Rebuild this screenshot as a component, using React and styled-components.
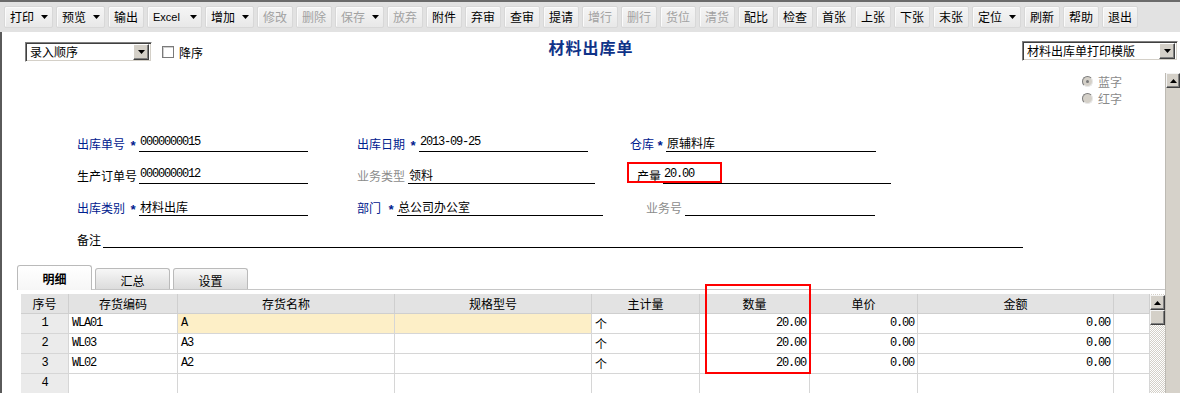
import React from 'react';
import styled, { createGlobalStyle } from 'styled-components';

const CJK = `"Noto Sans CJK SC", "Noto Sans", sans-serif`;
const MONO = `"Liberation Mono", "DejaVu Sans Mono", "Noto Sans CJK SC", monospace`;

const GlobalStyle = createGlobalStyle`
  html, body { margin: 0; padding: 0; background: #fff; }
  body { font-family: ${CJK}; font-size: 12px; color: #000; }
  *, *::before, *::after { box-sizing: border-box; }
`;

const Window = styled.div`
  width: 1180px;
  height: 393px;
  overflow: hidden;
  display: flex;
  flex-direction: column;
  background: #fff;
`;

/* ---------- toolbar ---------- */
const Toolbar = styled.div`
  height: 32px;
  flex-shrink: 0;
  border-top: 2px solid #6b6b6b;
  background: #e2e2e2;
  display: flex;
  align-items: center;
  gap: 3px;
  padding-left: 4px;
`;

const ToolButton = styled.div`
  width: ${(p) => p.$w}px;
  height: 22px;
  flex-shrink: 0;
  display: flex;
  align-items: center;
  justify-content: ${(p) => (p.$dd ? 'space-between' : 'center')};
  padding: ${(p) => (p.$dd ? '0 4px 0 5px' : '0')};
  border: 1px solid #d8d8d8;
  border-radius: 2px;
  background: linear-gradient(180deg, #f5f5f5 0%, #eeeeee 55%, #e8e8e8 100%);
  box-shadow: inset 1px 1px 0 #fbfbfb;
  color: ${(p) => (p.$disabled ? '#a2a2a2' : '#000')};
  font-size: 12px;
  line-height: 16px;
  white-space: nowrap;
`;

const ButtonText = styled.span`
  font-family: ${(p) => (p.$latin ? `"Liberation Sans", Arial, sans-serif` : CJK)};
  font-size: ${(p) => (p.$latin ? '11px' : '12px')};
`;

const Tri = ({ up }) => (
  <svg width="7" height="4" viewBox="0 0 7 4" style={{ display: 'block' }}>
    <polygon points={up ? '0,4 7,4 3.5,0' : '0,0 7,0 3.5,4'} fill="#000" />
  </svg>
);

/* ---------- main ---------- */
const Main = styled.div`
  flex: 1;
  min-height: 0;
  display: flex;
  flex-direction: column;
  border-left: 2px solid #5a5a5a;
`;

const HeaderRow = styled.div`
  height: 41px;
  flex-shrink: 0;
  display: grid;
  grid-template-columns: 1fr auto 1fr;
  align-items: start;
`;

const HeaderLeft = styled.div`
  display: flex;
  align-items: center;
  gap: 10px;
  margin: 10px 0 0 23px;
`;

const HeaderRight = styled.div`
  justify-self: end;
  margin: 9px 2px 0 0;
`;

const Title = styled.div`
  margin-top: 4px;
  font-size: 16px;
  line-height: 22px;
  font-weight: bold;
  letter-spacing: 1px;
  color: #0f3388;
`;

const Combo = styled.div`
  width: ${(p) => p.$w}px;
  height: 20px;
  display: flex;
  align-items: center;
  padding: 2px;
  background: #fff;
  border: 1px solid;
  border-color: #808080 #ffffff #ffffff #808080;
  box-shadow: inset 1px 1px 0 #404040, inset -1px -1px 0 #d4d0c8;
`;

const ComboText = styled.span`
  flex: 1;
  padding-left: 2px;
  line-height: 16px;
  white-space: nowrap;
`;

const ComboButton = styled.div`
  width: 16px;
  height: 16px;
  display: flex;
  align-items: center;
  justify-content: center;
  background: #d4d0c8;
  border: 1px solid;
  border-color: #ffffff #404040 #404040 #ffffff;
  box-shadow: inset -1px -1px 0 #808080;
`;

const CheckRow = styled.label`
  display: flex;
  align-items: center;
  gap: 5px;
`;

const CheckBox = styled.span`
  width: 12px;
  height: 12px;
  background: #fff;
  border: 1px solid #7a7a7a;
  box-shadow: inset 1px 1px 0 #cfcfcf;
`;

/* ---------- body ---------- */
const Body = styled.div`
  flex: 1;
  min-height: 0;
  display: flex;
`;

const Content = styled.div`
  flex: 1;
  min-width: 0;
  display: flex;
  flex-direction: column;
`;

const OuterScroll = styled.div`
  width: 15px;
  flex-shrink: 0;
  display: flex;
  flex-direction: column;
  background: #d6d2ca;
  border-left: 1px solid #bdbab3;
`;

const ScrollButton = styled.div`
  width: 100%;
  height: 15px;
  flex-shrink: 0;
  display: flex;
  align-items: center;
  justify-content: center;
  background: #d4d0c8;
  border: 1px solid;
  border-color: #f4f4f4 #404040 #404040 #f4f4f4;
  box-shadow: inset -1px -1px 0 #808080;
`;

const RadioGroup = styled.div`
  align-self: flex-end;
  margin-right: 43px;
  display: flex;
  flex-direction: column;
`;

const RadioItem = styled.div`
  height: 17px;
  display: flex;
  align-items: center;
  gap: 5px;
  color: #8a8a8a;
`;

const RadioDot = styled.span`
  width: 11px;
  height: 11px;
  border-radius: 50%;
  background: #d4d0c8;
  border: 1px solid;
  border-color: #7c7c7c #e8e8e8 #e8e8e8 #7c7c7c;
  display: flex;
  align-items: center;
  justify-content: center;
  &::after {
    content: '';
    width: 3px;
    height: 3px;
    border-radius: 50%;
    background: ${(p) => (p.$checked ? '#7a7a7a' : 'transparent')};
  }
`;

/* ---------- form ---------- */
const Form = styled.div`
  margin-top: 13px;
  padding-left: 75px;
  display: flex;
  flex-direction: column;
`;

const FormRow = styled.div`
  height: 32px;
  display: grid;
  grid-template-columns: 280px 270px 1fr;
  align-items: end;
`;

const Field = styled.div`
  position: relative;
  display: flex;
  align-items: flex-end;
  padding-left: ${(p) => p.$indent || 0}px;
  grid-column: ${(p) => (p.$span ? '1 / -1' : 'auto')};
`;

const LabelBox = styled.div`
  width: ${(p) => p.$w}px;
  height: 17px;
  display: flex;
  align-items: flex-end;
  justify-content: space-between;
  padding-right: 2px;
  flex-shrink: 0;
`;

const tones = { blue: '#00208e', black: '#000', gray: '#8c8c8c' };

const LabelText = styled.span`
  line-height: 16px;
  white-space: nowrap;
  color: ${(p) => tones[p.$tone]};
`;

const Star = styled.span`
  color: #00208e;
  font-family: ${MONO};
  font-size: 13px;
  font-weight: bold;
  line-height: 16px;
  position: relative;
  top: 3px;
`;

const Value = styled.div`
  width: ${(p) => p.$w}px;
  height: 17px;
  flex-shrink: 0;
  border-bottom: 1px solid #000;
  padding-left: 1px;
  line-height: 15px;
  white-space: nowrap;
  font-family: ${(p) => (p.$mono ? MONO : CJK)};
  font-size: 12px;
  letter-spacing: ${(p) => (p.$mono ? '-1.2px' : '0')};
`;

const RedMark = styled.div`
  position: absolute;
  left: 0;
  top: -5px;
  width: ${(p) => p.$w}px;
  height: ${(p) => p.$h}px;
  border: 2px solid #ff0000;
  pointer-events: none;
`;

/* ---------- tabs + grid ---------- */
const TabArea = styled.div`
  margin: 17px 0 0 15px;
  flex: 1;
  min-height: 0;
  display: flex;
  flex-direction: column;
`;

const TabStrip = styled.div`
  height: 25px;
  flex-shrink: 0;
  display: flex;
  align-items: flex-end;
  gap: 3px;
  border-bottom: 1px solid #c6c6c6;
`;

const Tab = styled.div`
  width: 75px;
  height: ${(p) => (p.$active ? 25 : 21)}px;
  margin-bottom: ${(p) => (p.$active ? -1 : 0)}px;
  display: flex;
  align-items: center;
  justify-content: center;
  padding-top: ${(p) => (p.$active ? 0 : 2)}px;
  border: 1px solid #bababa;
  border-bottom: none;
  border-radius: 3px 3px 0 0;
  background: ${(p) =>
    p.$active
      ? 'linear-gradient(180deg, #ffffff 0%, #f6f6f6 100%)'
      : 'linear-gradient(180deg, #f7f7f7 0%, #e9e9e9 50%, #dcdcdc 100%)'};
  font-weight: ${(p) => (p.$active ? 'bold' : 'normal')};
  font-size: 12px;
`;

const Panel = styled.div`
  flex: 1;
  padding: 4px 0 0 4px;
  display: flex;
`;

const GridWrap = styled.div`
  position: relative;
  display: flex;
  align-items: flex-start;
`;

const GridTable = styled.div`
  display: grid;
  grid-template-columns: ${(p) => p.$cols};
  grid-auto-rows: 20px;
`;

const HeadCell = styled.div`
  background: #e3e3e3;
  border-right: 1px solid #cfcfcf;
  border-bottom: 1px solid #cfcfcf;
  text-align: center;
  line-height: 19px;
  white-space: nowrap;
  overflow: hidden;
`;

const Cell = styled.div`
  background: ${(p) => p.$bg};
  border-right: 1px solid #d6d6d6;
  border-bottom: 1px solid #d6d6d6;
  padding: 0 3px;
  text-align: ${(p) => p.$align};
  line-height: 19px;
  white-space: nowrap;
  overflow: hidden;
  font-family: ${(p) => (p.$cjk ? CJK : MONO)};
  font-size: 12px;
  letter-spacing: ${(p) => (p.$cjk ? '0' : '-1.2px')};
`;

const GridScroll = styled.div`
  width: 15px;
  height: 100px;
  flex-shrink: 0;
  display: flex;
  flex-direction: column;
  padding-top: 1px;
  background: repeating-conic-gradient(#d4d0c8 0 25%, #ffffff 0 50%) 0 0 / 2px 2px;
`;

const toolButtons = [
  { t: '打印', dd: true },
  { t: '预览', dd: true },
  { t: '输出' },
  { t: 'Excel', dd: true, latin: true, w: 55 },
  { t: '增加', dd: true },
  { t: '修改', dis: true },
  { t: '删除', dis: true },
  { t: '保存', dd: true, dis: true },
  { t: '放弃', dis: true },
  { t: '附件' },
  { t: '弃审' },
  { t: '查审' },
  { t: '提请' },
  { t: '增行', dis: true },
  { t: '删行', dis: true },
  { t: '货位', dis: true },
  { t: '清货', dis: true },
  { t: '配比' },
  { t: '检查' },
  { t: '首张' },
  { t: '上张' },
  { t: '下张' },
  { t: '末张' },
  { t: '定位', dd: true },
  { t: '刷新' },
  { t: '帮助' },
  { t: '退出' },
];

const formRows = [
  [
    { label: '出库单号', tone: 'blue', star: true, lw: 62, vw: 169, value: '0000000015', mono: true },
    { label: '出库日期', tone: 'blue', star: true, lw: 62, vw: 169, value: '2013-09-25', mono: true },
    { label: '仓库', tone: 'blue', star: true, lw: 36, vw: 210, value: '原辅料库', indent: 3 },
  ],
  [
    { label: '生产订单号', tone: 'black', lw: 62, vw: 169, value: '0000000012', mono: true },
    { label: '业务类型', tone: 'gray', lw: 51, vw: 187, value: '领料' },
    { label: '产量', tone: 'black', lw: 26, vw: 228, value: '20.00', mono: true, indent: 10, mark: true },
  ],
  [
    { label: '出库类别', tone: 'blue', star: true, lw: 62, vw: 169, value: '材料出库' },
    { label: '部门', tone: 'blue', star: true, lw: 40, vw: 206, value: '总公司办公室' },
    { label: '业务号', tone: 'gray', lw: 39, vw: 190, value: '', indent: 19 },
  ],
  [{ label: '备注', tone: 'black', lw: 26, vw: 920, value: '', span: true }],
];

const columns = [
  { key: 'n', title: '序号', w: 48, align: 'center', index: true },
  { key: 'code', title: '存货编码', w: 109, align: 'left' },
  { key: 'name', title: '存货名称', w: 217, align: 'left', hl: true },
  { key: 'spec', title: '规格型号', w: 197, align: 'left', hl: true },
  { key: 'unit', title: '主计量', w: 108, align: 'left', cjk: true },
  { key: 'qty', title: '数量', w: 110, align: 'right' },
  { key: 'price', title: '单价', w: 108, align: 'right' },
  { key: 'amt', title: '金额', w: 196, align: 'right' },
  { key: 'pad', title: '', w: 36, align: 'left' },
];

const rows = [
  { n: '1', code: 'WLA01', name: 'A', spec: '', unit: '个', qty: '20.00', price: '0.00', amt: '0.00', hl: true },
  { n: '2', code: 'WL03', name: 'A3', spec: '', unit: '个', qty: '20.00', price: '0.00', amt: '0.00' },
  { n: '3', code: 'WL02', name: 'A2', spec: '', unit: '个', qty: '20.00', price: '0.00', amt: '0.00' },
  { n: '4' },
];

function cellBg(row, col) {
  if (col.index) return '#ebebeb';
  if (row.hl && col.hl) return '#fdefc7';
  return '#ffffff';
}

export default function App() {
  const cols = columns.map((c) => `${c.w}px`).join(' ');
  return (
    <Window>
      <GlobalStyle />
      <Toolbar>
        {toolButtons.map((b) => (
          <ToolButton key={b.t} $w={b.w || (b.dd ? 49 : 36)} $dd={b.dd} $disabled={b.dis}>
            <ButtonText $latin={b.latin}>{b.t}</ButtonText>
            {b.dd && <Tri />}
          </ToolButton>
        ))}
      </Toolbar>
      <Main>
        <HeaderRow>
          <HeaderLeft>
            <Combo $w={127}>
              <ComboText>录入顺序</ComboText>
              <ComboButton>
                <Tri />
              </ComboButton>
            </Combo>
            <CheckRow>
              <CheckBox />
              <span>降序</span>
            </CheckRow>
          </HeaderLeft>
          <Title>材料出库单</Title>
          <HeaderRight>
            <Combo $w={156}>
              <ComboText>材料出库单打印模版</ComboText>
              <ComboButton>
                <Tri />
              </ComboButton>
            </Combo>
          </HeaderRight>
        </HeaderRow>
        <Body>
          <Content>
            <RadioGroup>
              <RadioItem>
                <RadioDot $checked />
                <span>蓝字</span>
              </RadioItem>
              <RadioItem>
                <RadioDot />
                <span>红字</span>
              </RadioItem>
            </RadioGroup>
            <Form>
              {formRows.map((r, i) => (
                <FormRow key={i}>
                  {r.map((f) => (
                    <Field key={f.label} $indent={f.indent} $span={f.span}>
                      <LabelBox $w={f.lw}>
                        <LabelText $tone={f.tone}>{f.label}</LabelText>
                        {f.star && <Star>*</Star>}
                      </LabelBox>
                      <Value $w={f.vw} $mono={f.mono}>
                        {f.value}
                      </Value>
                      {f.mark && <RedMark $w={95} $h={21} />}
                    </Field>
                  ))}
                </FormRow>
              ))}
            </Form>
            <TabArea>
              <TabStrip>
                <Tab $active>明细</Tab>
                <Tab>汇总</Tab>
                <Tab>设置</Tab>
              </TabStrip>
              <Panel>
                <GridWrap>
                  <GridTable $cols={cols}>
                    {columns.map((c) => (
                      <HeadCell key={c.key}>{c.title}</HeadCell>
                    ))}
                    {rows.map((r) =>
                      columns.map((c) => (
                        <Cell
                          key={`${r.n}-${c.key}`}
                          $align={c.align}
                          $cjk={c.cjk}
                          $bg={cellBg(r, c)}
                        >
                          {r[c.key] || ''}
                        </Cell>
                      ))
                    )}
                  </GridTable>
                  <GridScroll>
                    <ScrollButton>
                      <Tri up />
                    </ScrollButton>
                    <ScrollButton />
                  </GridScroll>
                  <RedMark style={{ left: 684, top: -10 }} $w={106} $h={90} />
                </GridWrap>
              </Panel>
            </TabArea>
          </Content>
          <OuterScroll>
            <ScrollButton>
              <Tri up />
            </ScrollButton>
          </OuterScroll>
        </Body>
      </Main>
    </Window>
  );
}
